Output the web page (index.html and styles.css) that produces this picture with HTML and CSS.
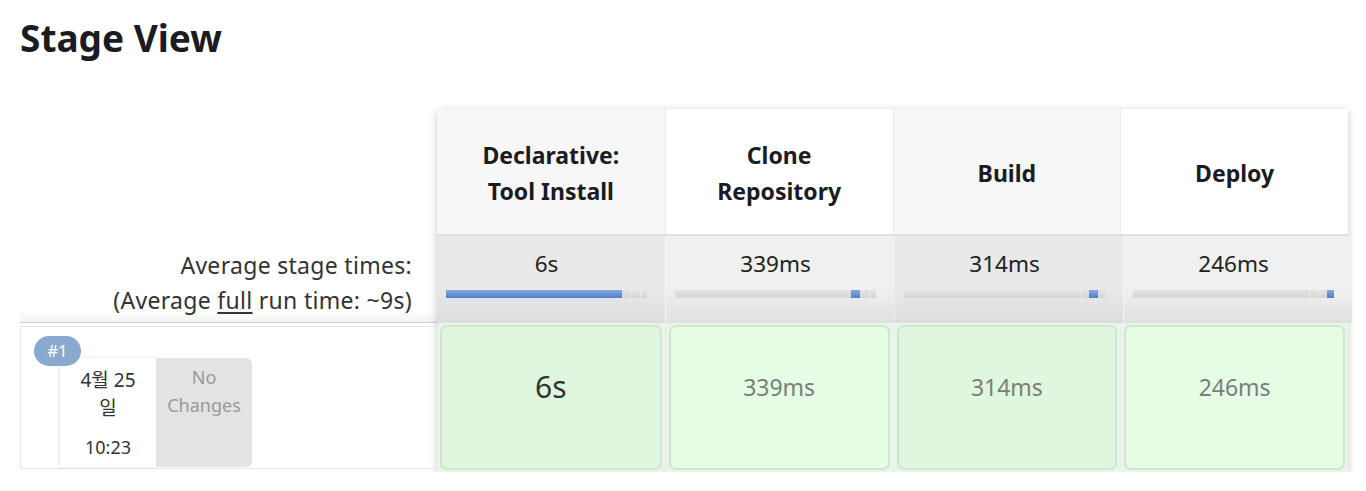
FILE: index.html
```html
<!DOCTYPE html>
<html lang="ko">
<head>
<meta charset="utf-8">
<title>Stage View</title>
<link rel="stylesheet" href="styles.css">
</head>
<body>
<h1 class="title">Stage View</h1>
<div class="stage-view">
  <div class="left-col">
    <div class="left-head"></div>
    <div class="left-avg">
      <div class="avg-line">Average stage times:</div>
      <div class="avg-line">(Average <u>full</u> run time: ~9s)</div>
    </div>
    <div class="left-build">
      <span class="badge">#1</span>
      <div class="build-meta">
        <div class="date-box">
          <div class="date">4월 25<br>일</div>
          <div class="time">10:23</div>
        </div>
        <div class="changes">No<br>Changes</div>
      </div>
    </div>
  </div>
  <div class="stages">
    <div class="row head-row">
      <div class="cell head odd">Declarative:<br>Tool Install</div>
      <div class="cell head even">Clone<br>Repository</div>
      <div class="cell head odd">Build</div>
      <div class="cell head even">Deploy</div>
    </div>
    <div class="row avg-row">
      <div class="cell avg odd">
        <div class="avg-time">6s</div>
        <div class="bar">
          <span class="seg on" style="width:176px"></span><span class="seg" style="width:9px"></span><span class="seg" style="width:9px"></span><span class="seg" style="width:7px"></span>
        </div>
      </div>
      <div class="cell avg even">
        <div class="avg-time">339ms</div>
        <div class="bar">
          <span class="seg" style="width:176px"></span><span class="seg on" style="width:9px"></span><span class="seg" style="width:9px"></span><span class="seg" style="width:7px"></span>
        </div>
      </div>
      <div class="cell avg odd">
        <div class="avg-time">314ms</div>
        <div class="bar">
          <span class="seg" style="width:176px"></span><span class="seg" style="width:9px"></span><span class="seg on" style="width:9px"></span><span class="seg" style="width:7px"></span>
        </div>
      </div>
      <div class="cell avg even">
        <div class="avg-time">246ms</div>
        <div class="bar">
          <span class="seg" style="width:176px"></span><span class="seg" style="width:9px"></span><span class="seg" style="width:9px"></span><span class="seg on" style="width:7px"></span>
        </div>
      </div>
    </div>
    <div class="row build-row">
      <div class="cell run odd"><div class="box big">6s</div></div>
      <div class="cell run even"><div class="box">339ms</div></div>
      <div class="cell run odd"><div class="box">314ms</div></div>
      <div class="cell run even"><div class="box">246ms</div></div>
    </div>
  </div>
</div>
</body>
</html>
```

FILE: styles.css
```css
* { box-sizing: border-box; }
body {
  margin: 0;
  background: #fff;
  font-family: "Noto Sans", "Noto Sans CJK KR", sans-serif;
  color: #333;
}
.title {
  margin: 0;
  padding: 13px 0 0 20px;
  font-size: 37px;
  line-height: 50px;
  font-weight: 700;
  color: #1b1b22;
}
.stage-view {
  display: flex;
  margin: 46px 0 0 20px;
}
.left-col {
  width: 417px;
  display: flex;
  flex-direction: column;
}
.left-head { height: 125px; }
.left-avg {
  height: 89px;
  padding: 14px 25px 0 0;
  text-align: right;
  font-size: 23px;
  letter-spacing: 0.3px;
  line-height: 35px;
  color: #333;
  border-bottom: 1px solid #cfcfcf;
  background: linear-gradient(#fff 85%, #f4f4f4);
}
.left-avg u { text-underline-offset: 3px; }
.left-build {
  position: relative;
  height: 143px;
  margin-top: 3px;
  border: 1px solid #e6e6e6;
  border-right: none;
}
.badge {
  position: absolute;
  left: 13px;
  top: 9px;
  width: 47px;
  height: 30px;
  border-radius: 15px;
  background: #89a9ce;
  color: #fff;
  font-size: 17px;
  line-height: 30px;
  text-align: center;
}
.build-meta {
  display: flex;
  margin: 31px 0 0 39px;
  height: 109px;
}
.date-box {
  width: 96px;
  background: #fff;
  box-shadow: -1px 0 3px rgba(0,0,0,0.12);
  text-align: center;
  font-size: 18px;
  line-height: 28px;
  color: #333;
  padding-top: 8px;
}
.date { font-size: 19px; }
.time { margin-top: 11px; }
.changes {
  width: 96px;
  background: #e3e3e3;
  border-radius: 0 6px 6px 0;
  text-align: center;
  font-size: 18px;
  line-height: 28px;
  color: #9a9a9a;
  padding-top: 5px;
}
.stages {
  width: 911px;
  box-shadow: 0 2px 8px rgba(0,0,0,0.22);
}
.row {
  display: grid;
  grid-template-columns: repeat(4, 1fr);
}
.cell + .cell { border-left: 1px solid #ececec; }
.head-row { height: 125px; }
.head {
  display: flex;
  align-items: center;
  justify-content: center;
  text-align: center;
  font-size: 23px;
  font-weight: 700;
  line-height: 36px;
  color: #1b1b22;
  padding-top: 3px;
}
.head.odd { background: #f7f7f7; }
.head.even { background: #fff; }
.avg-row {
  height: 89px;
  border-top: 2px solid #e0e0e0;
}
.avg {
  padding: 12px 18px 0 9px;
  text-align: center;
}
.avg.odd { background: linear-gradient(#e9e9e9 60%, #dcdcdc); }
.avg.even { background: linear-gradient(#f0f0f0 60%, #e0e0e0); border-left-color: #f6f6f6; }
.avg-time {
  font-size: 22.5px;
  line-height: 32px;
  color: #222;
}
.bar {
  display: flex;
  height: 8px;
  margin-top: 10px;
}
.seg {
  height: 8px;
  background: linear-gradient(#e3e3e3, #d6d6d6);
}
.seg + .seg { border-left: 1px solid #ebebeb; }
.seg.on { background: linear-gradient(#86abdc, #4e7fc8); border-left: none; }
.seg.on + .seg { border-left: none; }
.build-row {
  height: 149px;
}
.run {
  padding: 2px 3px 2px 3px;
  background: #e7f6e6;
}
.box {
  height: 100%;
  border: 2px solid #d3e4d2;
  border-radius: 7px;
  display: flex;
  align-items: flex-start;
  justify-content: center;
  padding-top: 41px;
  font-size: 23px;
  line-height: 38px;
  color: #7a7f7a;
}
.run.odd .box { background: #dff7de; }
.run.even .box { background: #e4fde4; }
.box.big { font-size: 30px; color: #333; }
```
